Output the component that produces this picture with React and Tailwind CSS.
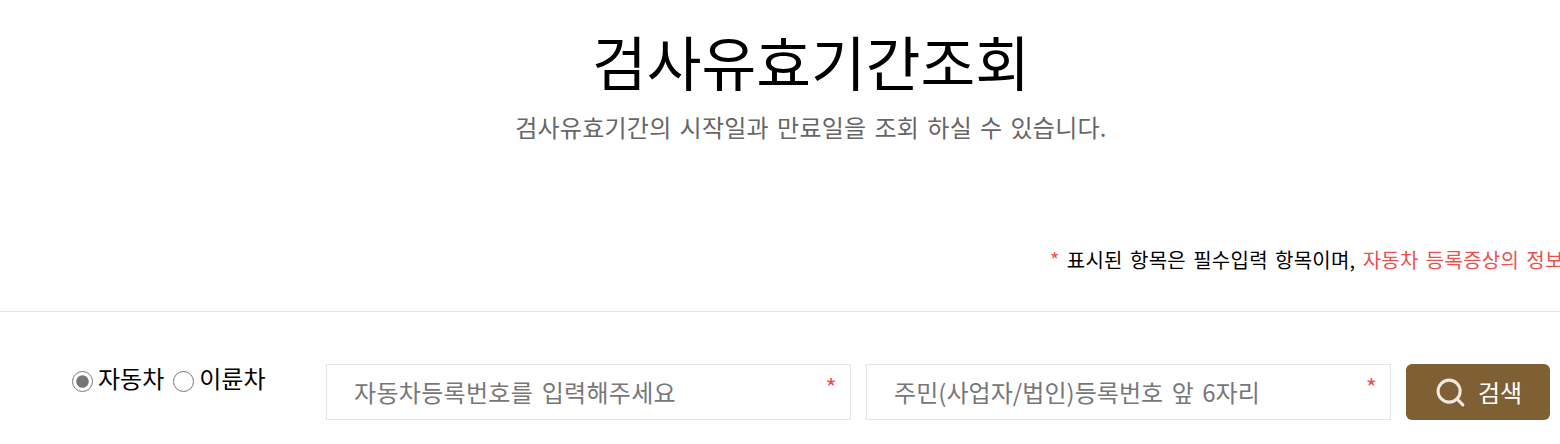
import React from "react"
import { Search } from "lucide-react"

const font = "font-['Noto_Sans_CJK_KR','Noto_Sans',sans-serif]"

const App = () => {
  return (
    <div className={`h-[444px] w-[1560px] overflow-hidden bg-white ${font}`}>
      <div className="w-[1622px]">
        <header className="flex flex-col items-center pt-[20px]">
          <h1 className="text-[59.5px] leading-[80px] font-normal text-black">검사유효기간조회</h1>
          <p className="mt-[2px] text-[24px] leading-[50px] tracking-[0.25px] [word-spacing:2.5px] text-[#666]">검사유효기간의 시작일과 만료일을 조회 하실 수 있습니다.</p>
        </header>

        <p className="mt-[90px] pl-[1050px] text-[20px] leading-[36px] tracking-[0.25px] [word-spacing:2.5px] whitespace-nowrap text-black">
          <span className="text-[#f04f4f]">*</span> 표시된 항목은 필수입력 항목이며, <span className="text-[#f04f4f]">자동차 등록증상의 정보</span>
        </p>

        <div className="mt-[33px] flex border-t border-[#e5e5e5] pt-[52px] pl-[72px]">
          <div className="flex h-[32px] w-[254px] items-start text-[24px] leading-[28px] text-black">
            <label className="flex items-start">
              <input type="radio" name="kind" defaultChecked className="mt-[7px] mr-[5px] size-[21px] accent-[#767676]" />
              자동차
            </label>
            <label className="ml-[9px] flex items-start">
              <input type="radio" name="kind" className="mt-[7px] mr-[5px] size-[21px] accent-[#767676]" />
              이륜차
            </label>
          </div>

          <div className="relative flex h-[56px] w-[525px] items-center border border-[#e5e5e5] pl-[27px] text-[24px] tracking-[0.3px] [word-spacing:3px] text-[#777]">
            자동차등록번호를 입력해주세요
            <span className="absolute top-[8px] right-[13px] text-[24px] leading-[28px] text-[#f04f4f]">*</span>
          </div>
          <div className="relative ml-[15px] flex h-[56px] w-[525px] items-center border border-[#e5e5e5] pl-[27px] text-[24px] tracking-[0.05px] [word-spacing:3px] text-[#777]">
            주민(사업자/법인)등록번호 앞 6자리
            <span className="absolute top-[8px] right-[13px] text-[24px] leading-[28px] text-[#f04f4f]">*</span>
          </div>

          <button className="ml-[15px] flex h-[56px] w-[144px] items-center justify-center gap-[11px] rounded-[6px] bg-[#7f5f34] text-[24px] text-white">
            <Search size={33} strokeWidth={2.2} className="text-[#f0e9df]" />
            검색
          </button>
        </div>
      </div>
    </div>
  )
}

export default App
